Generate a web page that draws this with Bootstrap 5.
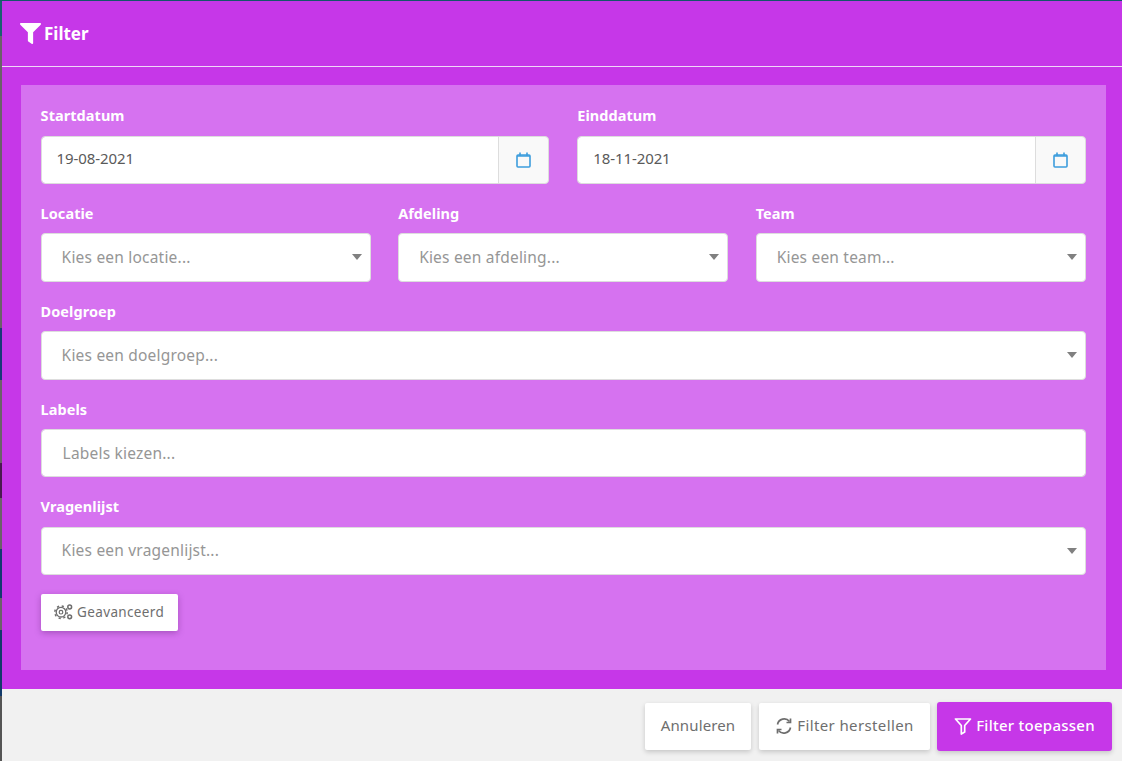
<!DOCTYPE html>
<html lang="nl">
<head>
  <meta charset="UTF-8">
  <meta name="viewport" content="width=device-width, initial-scale=1">
  <title>Filter</title>
  <link href="https://cdn.jsdelivr.net/npm/bootstrap@5.3.2/dist/css/bootstrap.min.css" rel="stylesheet">
  <style>
    html, body { height: 100%; }
    body {
      background:
        linear-gradient(#14566a, #14566a) left top / 100% 1px no-repeat,
        linear-gradient(#1a6070 36px, #6a6068 36px 328px, #1a3a78 328px 380px, #6a6068 380px 463px, #4a1a50 463px 498px, #6a6068 498px 549px, #123a70 549px 598px, #6a6068 598px 630px, #123a6a 630px 696px, #555 696px) left top / 2px 100% no-repeat,
        #f1f1f1;
      padding: 1px 0 0 2px;
      font-family: "Noto Sans", "Open Sans", sans-serif;
      color: #5f5f5f;
      overflow: hidden;
    }
    .filter-head {
      height: 66px;
      background: #c637e8;
      border-bottom: 1px solid #f0d8f8;
      color: #fff;
      padding-left: 18px;
      font-size: 17px;
      font-weight: 700;
      letter-spacing: 0;
    }
    .filter-head svg { margin-right: -1px; }
    .filter-body { background: #c637e8; padding: 18px 16px 19px 19px; }
    .filter-panel { background: #d672f0; padding: 20px 20px 39px 19.6px; height: 585px; }
    .filter-row { --bs-gutter-x: 28px; --bs-gutter-y: 0; }
    .filter-row-3 { --bs-gutter-x: 27.2px; }
    .field-label {
      display: block;
      color: #fff;
      font-size: 14.5px;
      font-weight: 700;
      letter-spacing: .05px;
      line-height: 21px;
      margin-top: .3px;
      margin-bottom: 9.3px;
    }
    .field-wrap { margin-bottom: 18.65px; }
    .filter-panel .form-control,
    .filter-panel .form-select {
      height: 48.5px;
      border: 1px solid #ddd;
      border-radius: 4px;
      font-size: 15px;
      color: #5a5a5a;
      box-shadow: none;
    }
    .filter-panel .form-control {
      padding: 4px 12px 8px 15px;
      letter-spacing: -.1px;
    }
    .filter-panel .form-select {
      padding-left: 20px;
      font-size: 15.5px;
      letter-spacing: .2px;
      color: #969696;
      background-image: none;
    }
    .select-box { position: relative; }
    .select-caret {
      position: absolute;
      right: 9px;
      top: 21px;
      width: 0;
      height: 0;
      border-left: 5px solid transparent;
      border-right: 5px solid transparent;
      border-top: 6px solid #808080;
      pointer-events: none;
    }
    .filter-panel .tags-input.form-control {
      padding: 6px 12px 6px 21px;
      font-size: 15.5px;
      letter-spacing: .2px;
    }
    .tags-input::placeholder { color: #969696; opacity: 1; }
    .date-addon {
      width: 51px;
      justify-content: center;
      background: #f9f9f9;
      border: 1px solid #ddd;
      border-radius: 0 4px 4px 0;
    }
    .btn-advanced {
      height: 37px;
      width: 137px;
      padding: 0 0 1px;
      background: #fff;
      border: 0;
      border-radius: 2px;
      font-size: 13.5px;
      letter-spacing: .35px;
      color: #6e6e6e;
      box-shadow: 0 2px 6px rgba(80, 20, 100, .35);
    }
    .filter-foot { padding: 13px 10px 0 0; }
    .btn-foot {
      height: 47px;
      padding: 0 0 2px;
      background: #fff;
      border: 0;
      border-radius: 2px;
      font-size: 15px;
      color: #6e6e6e;
      box-shadow: 0 2px 5px rgba(0, 0, 0, .18);
    }
    .btn-foot:hover { background: #fff; color: #6e6e6e; }
    .btn-cancel { width: 106px; margin-right: 8px; letter-spacing: .13px; }
    .btn-reset { width: 171px; margin-right: 7px; letter-spacing: .38px; }
    .btn-apply {
      width: 175px;
      height: 49px;
      background: #c637e8;
      color: #fff;
      border-radius: 3px;
      font-weight: 500;
      letter-spacing: .25px;
    }
    .btn-apply:hover { background: #c637e8; color: #fff; }
  </style>
</head>
<body>

<div class="filter-head d-flex align-items-center gap-1">
  <svg width="21" height="21" viewBox="0 0 512 512" fill="#fff"><path d="M487.976 0H24.028C2.71 0-8.047 25.866 7.058 40.971L192 225.941V432c0 7.831 3.821 15.17 10.237 19.662l80 55.98C298.02 518.69 320 507.493 320 487.98V225.941l184.947-184.97C520.021 25.896 509.338 0 487.976 0z"/></svg>
  <span>Filter</span>
</div>

<div class="filter-body">
  <div class="filter-panel">
    <div class="row filter-row">
      <div class="col-6 field-wrap">
        <label class="field-label">Startdatum</label>
        <div class="input-group">
          <input class="form-control" value="19-08-2021">
          <span class="input-group-text date-addon">
            <svg width="15" height="16" viewBox="0 0 15 16" fill="none" stroke="#3d9ddd" stroke-width="1.6"><rect x="1" y="3" width="13" height="12" rx="1"/><path d="M4 .5v3M11 .5v3M1 4h13"/></svg>
          </span>
        </div>
      </div>
      <div class="col-6 field-wrap">
        <label class="field-label">Einddatum</label>
        <div class="input-group">
          <input class="form-control" value="18-11-2021">
          <span class="input-group-text date-addon">
            <svg width="15" height="16" viewBox="0 0 15 16" fill="none" stroke="#3d9ddd" stroke-width="1.6"><rect x="1" y="3" width="13" height="12" rx="1"/><path d="M4 .5v3M11 .5v3M1 4h13"/></svg>
          </span>
        </div>
      </div>
    </div>
    <div class="row filter-row filter-row-3">
      <div class="col-4 field-wrap">
        <label class="field-label">Locatie</label>
        <div class="select-box">
          <select class="form-select"><option>Kies een locatie...</option></select>
          <span class="select-caret"></span>
        </div>
      </div>
      <div class="col-4 field-wrap">
        <label class="field-label">Afdeling</label>
        <div class="select-box">
          <select class="form-select"><option>Kies een afdeling...</option></select>
          <span class="select-caret"></span>
        </div>
      </div>
      <div class="col-4 field-wrap">
        <label class="field-label">Team</label>
        <div class="select-box">
          <select class="form-select"><option>Kies een team...</option></select>
          <span class="select-caret"></span>
        </div>
      </div>
    </div>
    <div class="row filter-row">
      <div class="col-12 field-wrap">
        <label class="field-label">Doelgroep</label>
        <div class="select-box">
          <select class="form-select"><option>Kies een doelgroep...</option></select>
          <span class="select-caret"></span>
        </div>
      </div>
      <div class="col-12 field-wrap">
        <label class="field-label">Labels</label>
        <input class="form-control tags-input" placeholder="Labels kiezen...">
      </div>
      <div class="col-12 field-wrap">
        <label class="field-label">Vragenlijst</label>
        <div class="select-box">
          <select class="form-select"><option>Kies een vragenlijst...</option></select>
          <span class="select-caret"></span>
        </div>
      </div>
    </div>
    <button type="button" class="btn btn-advanced d-inline-flex align-items-center justify-content-center gap-1">
      <svg width="19" height="16" viewBox="0 0 19 16" fill="none" stroke="#6e6e6e"><circle cx="7" cy="8.200" r="4.800" stroke-width="1.300"/><circle cx="7" cy="8.200" r="1.800" stroke-width="1.200"/><circle cx="7" cy="8.200" r="6.200" stroke-width="1.500" stroke-dasharray="2.200 2.670"/><circle cx="15.700" cy="3" r="1.900" stroke-width="1.500"/><circle cx="15.700" cy="12.800" r="1.900" stroke-width="1.500"/></svg>
      <span>Geavanceerd</span>
    </button>
  </div>
</div>

<div class="filter-foot d-flex justify-content-end align-items-center">
  <button type="button" class="btn btn-foot btn-cancel">Annuleren</button>
  <button type="button" class="btn btn-foot btn-reset d-inline-flex align-items-center justify-content-center gap-1">
    <svg width="18" height="18" viewBox="0 0 18 18" fill="none" stroke="#6e6e6e" stroke-width="1.700"><path d="M2.500 7.500A6.800 6.800 0 0 1 14.500 4.500"/><path d="M15.500 1.500v4h-4"/><path d="M15.500 10.500A6.800 6.800 0 0 1 3.500 13.500"/><path d="M2.500 16.500v-4h4"/></svg>
    <span>Filter herstellen</span>
  </button>
  <button type="button" class="btn btn-foot btn-apply d-inline-flex align-items-center justify-content-center gap-1">
    <svg width="18" height="18" viewBox="0 0 18 18" fill="none" stroke="#fff" stroke-width="1.700" stroke-linejoin="round"><path d="M1.500 2h15l-5.800 6.500v6.500l-3.400 2v-8.500z"/></svg>
    <span>Filter toepassen</span>
  </button>
</div>

<script src="https://cdn.jsdelivr.net/npm/bootstrap@5.3.2/dist/js/bootstrap.bundle.min.js"></script>
</body>
</html>
